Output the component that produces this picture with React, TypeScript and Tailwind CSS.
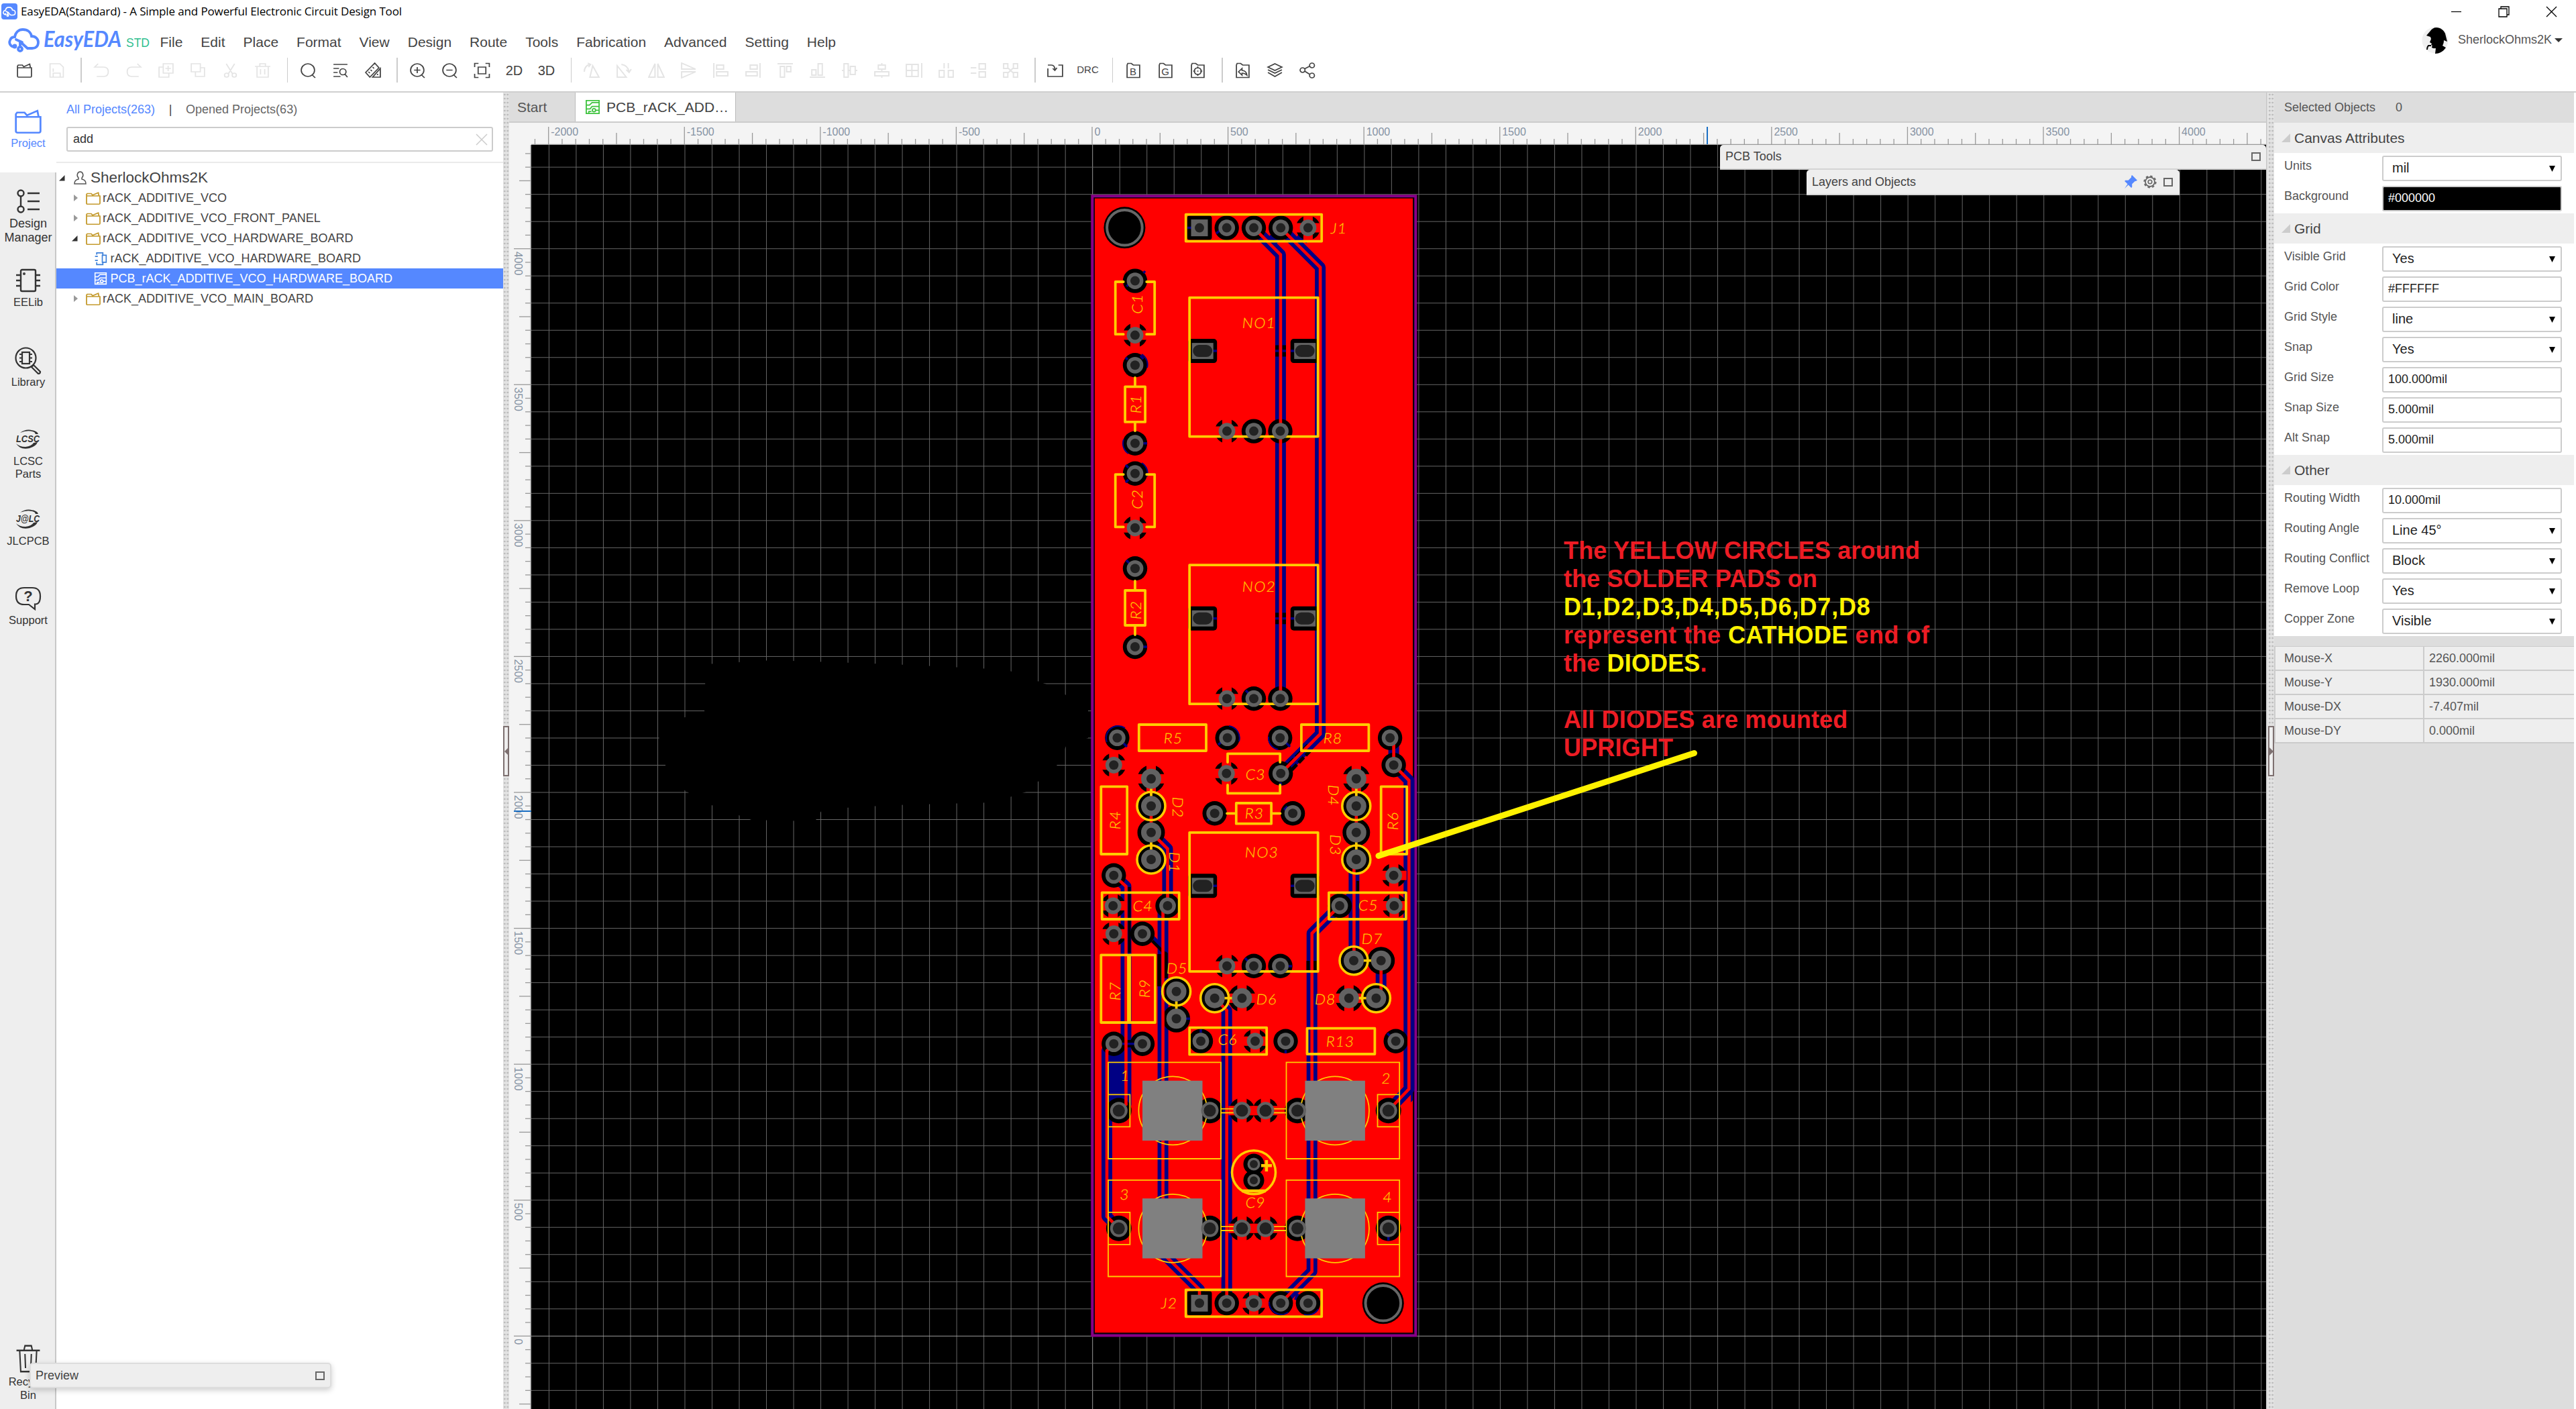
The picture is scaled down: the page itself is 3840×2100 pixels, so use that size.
import React from "react";

const FONT = "font-['Liberation_Sans',Arial,sans-serif]";

/* ---------- generic icon ---------- */
function Icon({ d, className = "", w = 24, h = 24, sw = 1.7, children }: { d?: string; className?: string; w?: number; h?: number; sw?: number; children?: React.ReactNode }) {
  return (
    <svg width={w} height={h} viewBox="0 0 24 24" preserveAspectRatio="none" fill="none" stroke="currentColor" strokeWidth={sw} className={"shrink-0 " + className}>
      {d && <path d={d} />}
      {children}
    </svg>
  );
}

const FOLDER = "M2 8h20v12.5q0 1.5-1.500 1.500h-17q-1.500 0-1.500-1.500zM2 8V5.500L3 4h6l2 2.500L19.500 2.500 20.500 8";
const FRAME = "M3 22.500V4l1-2.500h5L12 4h9v18.500z";

type Tool = { d?: string; t?: string; small?: boolean; letter?: string };
const GROUPS: { off?: boolean; items: (Tool & { on?: boolean })[] }[] = [
  { items: [{ d: FOLDER, on: true }, { d: "M2.500 2h14l5 5v15h-19zM7 22v-6h10v6M7 9v5" }] },
  {
    items: [
      { d: "M7 2 2 7h13q6.500 0 6.500 7t-6.500 7H5" },
      { d: "M17 2l5 5H9q-6.500 0-6.500 7t6.500 7h10" },
      { d: "M8 2h14v14H8zM8 7H2v15h14v-6M15 5v8M11 9h8" },
      { d: "M2 2h13v12H2zM8 14v7h13V8h-6" },
      { d: "M6 2l9 15M18 2L9 17M6.500 22a3 3 0 1 0 0-6 3 3 0 0 0 0 6zM17.500 22a3 3 0 1 0 0-6 3 3 0 0 0 0 6z" },
      { d: "M1 6h22M8 6V2h8v4M4 6v16h16V6M9 10v8M15 10v8" },
    ],
  },
  {
    items: [
      { on: true, d: "M11.500 21a9.500 9.500 0 1 0 0-19 9.500 9.500 0 0 0 0 19zM18 19l4 4" },
      { on: true, d: "M2 3h20M2 9h8M2 15h6M2 21h10M15.500 18.500a4.500 4.500 0 1 0 0-9 4.500 4.500 0 0 0 0 9zM18 17l4 5" },
      { on: true, d: "M15 1l6 7L8 22 2 15zM6 14l2 2M9 11l2 2M12 7l2 2M23 9v13H12zM19 17v2" },
    ],
  },
  {
    items: [
      { on: true, d: "M11.500 21a9.500 9.500 0 1 0 0-19 9.500 9.500 0 0 0 0 19zM18 19l4 4M11.500 7v9M7 11.500h9" },
      { on: true, d: "M11.500 21a9.500 9.500 0 1 0 0-19 9.500 9.500 0 0 0 0 19zM18 19l4 4M7 11.500h9" },
      { on: true, d: "M1.500 7V1.500H7M17 1.500h5.500V7M1.500 17v5.500H7M17 22.500h5.500V17M6.500 7h11v10h-11z" },
      { on: true, t: "2D" },
      { on: true, t: "3D" },
    ],
  },
  {
    items: [
      { d: "M9 22h13L13 5zM1 14q0-9 8-11M6 1l4 2-3 4" },
      { d: "M15 22H2V5zM8 3q9 1 11 11M15 11l4 4 3-5" },
      { d: "M10 2v20H1zM14 2v20h9z" },
      { d: "M2 1v9h20zM2 14h20L2 23z" },
      { d: "M2 1v22M6 4h10v6H6zM6 14h16v6H6z" },
      { d: "M22 1v22M8 4h10v6H8zM2 14h16v6H2z" },
      { d: "M1 2h22M5 6h6v16H5zM14 6h6v8h-6z" },
      { d: "M1 22h22M4 11h6v8H4zM13 2h6v17h-6z" },
      { d: "M1 12h3M10 12h3M20 12h3M4 2h6v20H4zM13 6h7v12h-7z" },
      { d: "M12 1v3M12 10v4M12 20v3M7 4h10v6H7zM2 14h20v6H2z" },
      { d: "M1 3h17v18H1zM9 3v18M1 12h17M23 1v22" },
      { d: "M9 1v8M15 1v8M2 12h7v10H2zM15 12h7v10h-7z" },
      { d: "M1 8h8M1 16h8M13 2h9v8h-9zM13 14h9v8h-9z" },
      { d: "M2 2h6v7H2zM16 2h6v7h-6zM2 15h6v7H2zM16 15h6v7h-6zM8 8l8 8M16 8l-8 8" },
    ],
  },
  { items: [{ on: true, d: "M1 9v12h21V4h-6M1 4h5q5 0 5 7M8 9l3 3 3-4" }, { on: true, t: "DRC", small: true }] },
  {
    items: [
      { on: true, d: FRAME, letter: "B" },
      { on: true, d: FRAME, letter: "G" },
      { on: true, d: FRAME + "M12 8a5 5 0 1 0 0 10 5 5 0 0 0 0-10zM12 6v3M12 17v3M5.500 13h3M15.500 13h3M11 13h2" },
    ],
  },
  {
    items: [
      { on: true, d: FRAME + "M6 14l5-5v3q6 0 7 7-3-3-7-3v3z" },
      { on: true, d: "M12 2l10 5-10 5L2 7zM2 11l10 5 10-5M2 15l10 6 10-6" },
      { on: true, d: "M5.500 15a3.500 3.500 0 1 0 0-7 3.500 3.500 0 0 0 0 7zM19 8a3.500 3.500 0 1 0 0-7 3.500 3.500 0 0 0 0 7zM19 23a3.500 3.500 0 1 0 0-7 3.500 3.500 0 0 0 0 7zM8.500 9.500l7.500-4M8.500 13l7.500 5" },
    ],
  },
];

function Toolbar() {
  return (
    <div className="flex h-[49px] items-center pl-3">
      {GROUPS.map((g, i) => (
        <React.Fragment key={i}>
          {i > 0 && <div className="ml-3 mr-[6px] h-[37px] w-[1.5px] bg-[#ccc]" />}
          {g.items.map((b, j) => (
            <div key={j} className={"flex h-9 w-12 items-center justify-center " + (b.on ? "text-[#444]" : "text-[#e4e4e4]")}>
              {b.t ? (
                <span className={b.small ? "text-[15px]" : "text-[20px]"}>{b.t}</span>
              ) : (
                <span className="relative flex">
                  <Icon d={b.d} w={25} h={24} sw={i === 4 ? 1.9 : 1.7} />
                  {b.letter && <span className="absolute inset-x-0 top-[5px] text-center text-[15px] leading-[18px]">{b.letter}</span>}
                </span>
              )}
            </div>
          ))}
        </React.Fragment>
      ))}
    </div>
  );
}

function Header() {
  return (
    <header className="flex h-[138px] shrink-0 flex-col border-b-2 border-[#cfcfcf] bg-white">
      <div className="flex h-[34px] items-center pl-[2px]">
        <div className="flex size-6 items-center justify-center rounded-[4px] bg-[#5588ff] text-white">
          <Cloud w={20} h={17} sw={4} />
        </div>
        <span className="ml-[5px] font-['Open_Sans','Noto_Sans',sans-serif] text-[17px] tracking-[-0.13px] text-black">EasyEDA(Standard) - A Simple and Powerful Electronic Circuit Design Tool</span>
        <div className="ml-auto flex items-center gap-[54px] pr-[28px] text-black">
          <svg width="17" height="17" stroke="currentColor" fill="none" strokeWidth="1.200"><path d="M1 8.500h15" /></svg>
          <svg width="17" height="17" stroke="currentColor" fill="none" strokeWidth="1.300"><path d="M1 4h12v12H1zM4 4V1h12v12h-3" /></svg>
          <svg width="17" height="17" stroke="currentColor" fill="none" strokeWidth="1.300"><path d="M1 1l15 15M16 1L1 16" /></svg>
        </div>
      </div>
      <div className="flex h-[46px] items-center">
        <div className="ml-3 flex w-[212px] items-center pt-[6px] text-[#5588ff]">
          <Cloud w={48} h={36} sw={3.8} />
          <svg width="124" height="42" viewBox="0 0 124 42" className="ml-[2px] overflow-visible">
            <g transform="translate(3 31) scale(0.86 1)">
              <text x="0" y="0" textLength="135" lengthAdjust="spacingAndGlyphs" fill="#5588ff" fontSize="33" fontStyle="italic" fontWeight="700" fontFamily="Lato, sans-serif">EasyEDA</text>
            </g>
          </svg>
          <span className="ml-[2px] pt-[8px] text-[17.5px] text-[#2fbf8f]">STD</span>
        </div>
        <nav className="ml-[14.500px] flex h-full items-center gap-[27px] pt-[12px] text-[21px] leading-[24px] text-[#444]">
          {["File", "Edit", "Place", "Format", "View", "Design", "Route", "Tools", "Fabrication", "Advanced", "Setting", "Help"].map((m) => (
            <span key={m}>{m}</span>
          ))}
        </nav>
        <div className="ml-auto flex items-center pr-[20px] pt-[5px] text-[18px] text-[#555]">
          <Avatar />
          <span className="ml-[14px]">SherlockOhms2K</span>
          <svg width="12" height="6" className="ml-[4px]"><path d="M0 0h12L6 6z" fill="#333" /></svg>
        </div>
      </div>
      <Toolbar />
    </header>
  );
}

function Cloud({ w, h, sw }: { w: number; h: number; sw: number }) {
  return (
    <svg width={w} height={h} viewBox="0 0 48 36" fill="none" stroke="currentColor" strokeWidth={sw} strokeLinecap="round" className="shrink-0">
      <path d="M9 28C3 27 1 22 3 18c1-3 4-5 7-5C11 6 16 2 22 2c7 0 12 4 13 10 6 0 10 4 10 9 0 6-4 9-9 9h-7l-9-8" />
      <path d="M21 21L12 17" />
      <circle cx="18" cy="31" r="3" />
      <path d="M18 27v-7" />
      <circle cx="10" cy="27" r="1.500" />
    </svg>
  );
}

function Avatar() {
  return (
    <svg width="40" height="40" viewBox="0 0 40 40">
      <circle cx="20" cy="20" r="19.500" fill="#f0f0f0" />
      <path d="M7 13l6-7c2-3 5-5 9-5 6 0 11 4 13 9l2 8 1 4-5-2c0 4-1 6-2 8l5 3c-4 6-10 9-16 9l1-8c-3 0-6 0-6-2l1-2-2-1 1-2-3-2 2-5-1-3z" fill="#000" />
      <path d="M14 28h-4q-2 2-2 6" stroke="#000" strokeWidth="2" fill="none" />
    </svg>
  );
}

/* ---------- left rail ---------- */
function Swoosh({ label }: { label: string }) {
  return (
    <svg width="40" height="32" viewBox="0 0 40 32" className="overflow-visible">
      <path d="M8 6Q20-3 34 6l-1 1Q22 0 8 6zM2 22q6 10 20 7 10-3 12-9l-6 1q-3 5-12 6-9 0-14-5z" fill="#333" />
      <path d="M26 2q8 2 9 6h-4q-1-3-5-6z" fill="#333" />
      <text x="2" y="20" textLength="35" lengthAdjust="spacingAndGlyphs" fontSize="14" fontWeight="700" fontStyle="italic" fontFamily="Liberation Sans, sans-serif" fill="#333">{label}</text>
    </svg>
  );
}

const RAIL: { label: string[]; icon: React.ReactNode; big?: boolean; active?: boolean }[] = [
  { label: ["Project"], active: true, icon: <Icon d={FOLDER} w={44} h={40} sw={1.5} /> },
  {
    label: ["Design", "Manager"],
    big: true,
    icon: (
      <svg width="36" height="36" viewBox="0 0 36 36" fill="none" stroke="currentColor" strokeWidth="2.400">
        <circle cx="7" cy="6" r="4.500" /><circle cx="7" cy="30" r="4.500" /><path d="M7 10.500v15M17 6h18M17 18h18M17 30h18" />
      </svg>
    ),
  },
  {
    label: ["EELib"],
    icon: (
      <svg width="38" height="36" viewBox="0 0 38 36" fill="none" stroke="currentColor" strokeWidth="2.400">
        <rect x="8" y="2" width="22" height="32" rx="2" /><path d="M1 10h7M1 18h7M1 26h7M30 10h7M30 18h7M30 26h7" /><circle cx="13" cy="8" r=".8" />
      </svg>
    ),
  },
  {
    label: ["Library"],
    icon: (
      <svg width="40" height="42" viewBox="0 0 40 42" fill="none" stroke="currentColor" strokeWidth="2.200">
        <circle cx="16.500" cy="17.500" r="15" /><rect x="11" y="9" width="11" height="17" /><path d="M7 12h4M7 17.500h4M7 23h4M22 12h4M22 17.500h4M22 23h4" /><path d="M25 31l3-3 10 10q0 3-3 3z" />
      </svg>
    ),
  },
  { label: ["LCSC", "Parts"], icon: <Swoosh label="LCSC" /> },
  { label: ["JLCPCB"], icon: <Swoosh label="J@LC" /> },
  {
    label: ["Support"],
    icon: (
      <span className="relative flex">
        <svg width="40" height="36" viewBox="0 0 40 36" fill="none" stroke="currentColor" strokeWidth="2.200"><path d="M14 2h12q12 0 12 12.500T30 26.500V34l-9-7h-7Q2 27 2 14.500T14 2z" /></svg>
        <span className="absolute inset-x-0 top-[3px] text-center text-[22px] font-bold leading-6">?</span>
      </span>
    ),
  },
];

function RailItem({ label, icon, big, active }: (typeof RAIL)[number]) {
  return (
    <div className={"flex h-[118.5px] w-[84px] shrink-0 flex-col items-center " + (active ? "bg-white text-[#5588ff]" : "text-[#333]")}>
      <div className="flex h-[66px] items-center justify-center pt-[20px]">{icon}</div>
      <div className={"text-center " + (big ? "text-[18px] leading-[21px]" : "text-[16.5px] leading-[19px]")}>
        {label.map((l) => <div key={l}>{l}</div>)}
      </div>
    </div>
  );
}

function Rail() {
  return (
    <aside className="flex w-[84px] shrink-0 flex-col border-r-2 border-[#c8c8c8] bg-[#eee]">
      {RAIL.map((r) => <RailItem key={r.label[0]} {...r} />)}
      <div className="mt-auto flex w-[84px] flex-col items-center pb-[11px] text-[16.500px] leading-[19.500px] text-[#333]">
        <Icon w={38} h={42} sw={1.300} d="M1 5h22M8 5l1-4h6l1 4M4 5l1 18h14l1-18M9 8l.5 12M15 8l-.5 12" />
        <div className="pt-[4px]">Recycle</div>
        <div>Bin</div>
      </div>
    </aside>
  );
}

/* ---------- project tree ---------- */
const Folder = () => <Icon d={FOLDER} w={24} h={21} sw={1.800} className="text-[#c49a2c]" />;

function PcbIcon({ className, s = 22 }: { className: string; s?: number }) {
  return <Icon w={s} h={s} sw={1.900} className={className} d="M2 2h20v20H2zM2 9h5l4-4h11M2 15h6l3-4h11M6 22v-3h4M14 14.500a2.500 2.500 0 1 0 0 5 2.500 2.500 0 0 0 0-5zM16.500 17H22" />;
}

function Collapsed() {
  return <svg width="8" height="12" className="ml-[25px] mr-[10px] shrink-0"><path d="M1 1l6 5-6 5z" fill="#999" /></svg>;
}
function Expanded({ className }: { className: string }) {
  return <svg width="9" height="9" className={"shrink-0 " + className}><path d="M8.500 0v8.500H0z" fill="#333" /></svg>;
}

function ProjectPanel() {
  return (
    <section className="flex w-[666px] shrink-0 flex-col bg-white">
      <div className="flex h-[51px] items-center pl-[15px] text-[18px] text-[#666]">
        <span className="text-[#5588ff]">All Projects(263)</span>
        <span className="w-[46px] text-center text-[#444]">|</span>
        <span>Opened Projects(63)</span>
      </div>
      <div className="ml-[15px] flex h-[37px] w-[636px] items-center justify-between rounded-[3px] border-2 border-[#ccc] pl-[8px] pr-[6px]">
        <span className="text-[18px] text-[#333]">add</span>
        <svg width="18" height="18" stroke="#ccc" strokeWidth="1.500"><path d="M1 1l16 16M17 1L1 17" /></svg>
      </div>
      <div className="mt-[15px] h-[2px] bg-[#eaeaea]" />
      <div className="flex flex-col pt-[7px] text-[18px] text-[#444] [&>div]:h-[30px]">
        <div className="flex items-center text-[22.5px]">
          <Expanded className="ml-[4px] mr-[13px]" />
          <svg width="19" height="20" viewBox="0 0 19 20" fill="none" stroke="#555" strokeWidth="1.500" className="mr-[6px]"><path d="M9.500 1a4.500 5 0 0 1 2.500 9v2q6 1 6 7H1q0-6 6-7v-2a4.500 5 0 0 1 2.500-9z" /></svg>
          SherlockOhms2K
        </div>
        <div className="flex items-center"><Collapsed /><Folder /><span className="ml-[2px]">rACK_ADDITIVE_VCO</span></div>
        <div className="flex items-center"><Collapsed /><Folder /><span className="ml-[2px]">rACK_ADDITIVE_VCO_FRONT_PANEL</span></div>
        <div className="flex items-center"><Expanded className="ml-[23px] mr-[11px]" /><Folder /><span className="ml-[2px]">rACK_ADDITIVE_VCO_HARDWARE_BOARD</span></div>
        <div className="flex items-center pl-[56px]">
          <Icon w={20} h={21} sw={2} className="text-[#3b7fd9]" d="M2 8h5M2 15h5M5 5V2h11v3M5 18v4h11v-3M15 6h7v12h-7z" />
          <span className="ml-[4.5px]">rACK_ADDITIVE_VCO_HARDWARE_BOARD</span>
        </div>
        <div className="flex items-center bg-[#5588ff] pl-[56px] text-white">
          <PcbIcon className="text-white" s={20} />
          <span className="ml-[4.5px]">PCB_rACK_ADDITIVE_VCO_HARDWARE_BOARD</span>
        </div>
        <div className="flex items-center"><Collapsed /><Folder /><span className="ml-[2px]">rACK_ADDITIVE_VCO_MAIN_BOARD</span></div>
      </div>
    </section>
  );
}

function Splitter({ right }: { right?: boolean }) {
  return (
    <div className="flex w-[9px] shrink-0 flex-col bg-[#e2e2e2] bg-[radial-gradient(#bdbdbd_1px,transparent_1.2px)] bg-[length:4.5px_6px]">
      <div className="mt-[944px] flex h-[75px] w-[9px] items-center justify-center border-2 border-[#7d7070] bg-[#eee]">
        <svg width="6" height="12"><path d={right ? "M0 0l6 6-6 6z" : "M6 0L0 6l6 6z"} fill="#7d7070" /></svg>
      </div>
    </div>
  );
}

/* ---------- rulers ---------- */
const X0 = 1628.5;
const Y0 = 1991.3;
const STEP = 40.515;
const range = (a: number, b: number) => Array.from({ length: b - a + 1 }, (_, i) => a + i);

function TopRuler() {
  return (
    <svg width="2619" height="33" viewBox="759 183 2619 33" className="block shrink-0 bg-[#f4f4f4]">
      <path d="M792 215.500H3378" stroke="#999" strokeWidth="1.500" />
      {range(-41, 86).map((n) => {
        const x = X0 - 0.500 + (n * STEP) / 2;
        const y = n % 10 === 0 ? 189 : n % 5 === 0 ? 198 : 207;
        return <path key={n} d={`M${x} ${y}V215`} stroke="#999" strokeWidth="1.300" />;
      })}
      {range(-4, 8).map((n) => (
        <text key={n} x={X0 + 3 + n * 5 * STEP} y="202" fontSize="16" fill="#8592a3" fontFamily="Liberation Sans, sans-serif">{n * 500}</text>
      ))}
      <path d="M2545 189V215" stroke="#1a6fc4" strokeWidth="2" />
    </svg>
  );
}

function SideRuler() {
  return (
    <svg width="33" height="1884" viewBox="759 216 33 1884" className="block shrink-0 bg-[#f4f4f4]">
      <path d="M791.300 216V2100" stroke="#999" strokeWidth="1.500" />
      {range(-5, 87).map((n) => {
        const y = Y0 - (n * STEP) / 2;
        const x = n % 10 === 0 ? 766 : n % 5 === 0 ? 774 : 783;
        return <path key={n} d={`M${x} ${y}H792`} stroke="#999" strokeWidth="1.300" />;
      })}
      {range(0, 8).map((n) => (
        <text key={n} transform={`translate(767 ${Y0 + 4 - n * 5 * STEP}) rotate(90)`} fontSize="16" fill="#8592a3" fontFamily="Liberation Sans, sans-serif">{n * 500}</text>
      ))}
      <path d="M766 1209H792" stroke="#1a6fc4" strokeWidth="2" />
    </svg>
  );
}

/* ---------- board ---------- */
type Pad = { x: number; y: number; k?: "s" | "d" | "t" | "c" | "w"; th?: boolean; ring?: boolean };
const KIND = {
  s: { b: 18.200, g: 12.400, h: 7 },
  d: { b: 20.500, g: 15, h: 7 },
  t: { b: 18.200, g: 12.600, h: 7.500 },
  w: { b: 19, g: 13, h: 9 },
  c: { b: 15.500, g: 9.500, h: 6 },
};
const NO_TOPS = [443.600, 842.200, 1240.800];
const PADS: Pad[] = [
  { x: 1828.700, y: 339.600 }, { x: 1869, y: 339.600 }, { x: 1909.200, y: 339.600 }, { x: 1949.900, y: 339.600, th: true },
  { x: 1692, y: 418.600 }, { x: 1692, y: 499.600, th: true }, { x: 1692, y: 544.300 }, { x: 1692, y: 660.700 },
  { x: 1692, y: 705.700 }, { x: 1692, y: 786.800, th: true }, { x: 1692, y: 847.300 }, { x: 1692, y: 964 },
  ...NO_TOPS.flatMap((t) => [{ x: 1829, y: t + 199, th: true }, { x: 1869, y: t + 199 }, { x: 1908.500, y: t + 199 }]),
  { x: 1665.400, y: 1099.700 }, { x: 1829.700, y: 1099.700 }, { x: 1908.200, y: 1099.700 }, { x: 2072.100, y: 1099.700 },
  { x: 1660.300, y: 1140.300, th: true }, { x: 2077.600, y: 1140.300 },
  { x: 1828.300, y: 1152.700, th: true }, { x: 1909.200, y: 1152.700 },
  { x: 1810.700, y: 1212.300 }, { x: 1927.100, y: 1212.300 },
  { x: 1716, y: 1160.700, k: "d", th: true }, { x: 1716, y: 1201.300, k: "d", ring: true }, { x: 1716, y: 1240.700, k: "d" }, { x: 1716, y: 1281, k: "d", ring: true },
  { x: 2021.800, y: 1160.700, k: "d", th: true }, { x: 2021.800, y: 1201.300, k: "d", ring: true }, { x: 2021.800, y: 1240.700, k: "d" }, { x: 2021.800, y: 1281, k: "d", ring: true },
  { x: 1660.300, y: 1304.700 }, { x: 2077.600, y: 1304.700, th: true },
  { x: 1659.200, y: 1350, th: true }, { x: 1740.500, y: 1350 }, { x: 1997, y: 1350 }, { x: 2078.300, y: 1350, th: true },
  { x: 1660.300, y: 1391.700, th: true }, { x: 1703, y: 1391.700 },
  { x: 2018, y: 1431.700, k: "d", ring: true }, { x: 2058.700, y: 1431.700, k: "d" },
  { x: 1753.600, y: 1477.700, k: "d", ring: true }, { x: 1753.600, y: 1518.300, k: "d" },
  { x: 1810.700, y: 1487.700, k: "d", ring: true }, { x: 1851.400, y: 1487.700, k: "d", th: true },
  { x: 2010.800, y: 1487.700, k: "d", th: true }, { x: 2051.400, y: 1487.700, k: "d", ring: true },
  { x: 1660.300, y: 1555.700 }, { x: 1703, y: 1555.700 },
  { x: 1790, y: 1551.700 }, { x: 1871, y: 1551.700, th: true }, { x: 1916.500, y: 1551.700 }, { x: 2080.700, y: 1551.700 },
  ...[1655.300, 1830.800].flatMap((y): Pad[] => [
    { x: 1667.800, y, k: "w" }, { x: 1803.500, y, k: "w" }, { x: 1851.400, y, k: "w", th: true },
    { x: 1886.500, y, k: "w", th: true }, { x: 1934, y, k: "w" }, { x: 2069.700, y, k: "w" },
  ]),
  { x: 1869, y: 1735, k: "c" }, { x: 1869, y: 1759.300, k: "c" },
  { x: 1828.700, y: 1942.300 }, { x: 1869, y: 1942.300, th: true }, { x: 1909.200, y: 1942.300 }, { x: 1949.900, y: 1942.300 },
];

const TRACKS = [
  "M1869 339.600L1908.900 379.500V1041",
  "M1909.200 339.600L1968.100 398.500V1094L1909.200 1152.700",
  "M2077.600 1100V1140.300L2100.300 1163V1623L2069.700 1655",
  "M1716 1201V1240.700L1740.500 1265V1350",
  "M1740.500 1350L1733.600 1357V1868L1788 1922V1942",
  "M1660.300 1304.700L1678.500 1321V1646L1667.800 1655",
  "M1997 1350L1955.700 1391V1895L1909.200 1942",
  "M2021.800 1201V1240",
  "M2021.800 1281L2018.400 1284V1431",
  "M1660.300 1555.700L1650 1566V1813L1667.800 1830.700",
  "M1810.700 1487.700L1828.700 1506V1942",
  "M2058.700 1431.700V1480",
];

function rect(x1: number, y1: number, x2: number, y2: number) {
  return `M${x1} ${y1}H${x2}V${y2}H${x1}Z`;
}

const SILK = [
  rect(1767.700, 319.600, 1970.200, 359.600), rect(1767.700, 1922.300, 1970.200, 1962.300),
  ...[[420, 498.200], [707.100, 785.400]].flatMap(([a, b]) => [`M1674.700 ${a}H1662.700V${b}H1674.700`, `M1709.200 ${a}H1721.200V${b}H1709.200`]),
  rect(1677.100, 576.400, 1707.100, 628.900), "M1692 563V576M1692 629V642",
  rect(1677.100, 880, 1707.100, 932), "M1692 866V880M1692 932V946",
  ...NO_TOPS.map((t) => rect(1773.200, t, 1964.700, t + 207)),
  rect(1697.800, 1080, 1798, 1119), rect(1939.900, 1080, 2040.400, 1119),
  "M1830 1136V1123.300H1908.200V1136M1830 1170V1182.300H1908.200V1170",
  rect(1842.800, 1197, 1895.100, 1227.700), "M1829 1212.300H1842M1895 1212.300H1908.500",
  rect(1641.300, 1172.300, 1680.200, 1273), rect(2058.700, 1172.300, 2097.200, 1273),
  rect(1642.700, 1330.300, 1757.700, 1370), rect(1980.900, 1330.300, 2095.900, 1370),
  rect(1641.300, 1423.300, 1682, 1524), rect(1684, 1423.300, 1721.900, 1524),
  rect(1773.200, 1531.700, 1888.200, 1571.700), rect(1948.500, 1532.700, 2049.400, 1571),
  "M1716 1175.700V1186.700M1716 1255.700V1266M2021.800 1175.700V1186.700M2021.800 1255.700V1266",
  "M1753.600 1493V1503M1826 1487.700H1837M2026 1487.700H2036M2033 1431.700H2044",
].join("");

type Lab = [string, number, number, number?];
const LABELS: Lab[] = [
  ["J1", 1983, 348], ["NO1", 1851, 489], ["NO2", 1851, 881.500], ["NO3", 1855, 1278],
  ["C1", 1703, 468.5, -90], ["R1", 1701, 617, -90], ["C2", 1703, 759.500, -90], ["R2", 1701, 924, -90],
  ["R5", 1734, 1107.500], ["R8", 1972, 1107.500], ["C3", 1856, 1161.500], ["R3", 1855, 1220],
  ["D2", 1748, 1187, 90], ["D1", 1743, 1269, 90], ["D4", 1980, 1169, 90], ["D3", 1983, 1243, 90],
  ["R4", 1670, 1237, -90], ["R6", 2084, 1238, -90], ["C4", 1688, 1357.500], ["C5", 2024, 1356.500],
  ["R7", 1670, 1492, -90], ["R9", 1714, 1488, -90], ["D5", 1738, 1450.500], ["D6", 1872, 1497],
  ["D7", 2029, 1407], ["D8", 1959, 1496.500], ["C6", 1815, 1557], ["R13", 1976, 1559.500],
  ["1", 1670, 1611], ["2", 2059, 1615], ["3", 1669, 1787.500], ["4", 2061, 1791.500], ["C9", 1856, 1800], ["J2", 1730, 1949.500],
];

function PadCore({ p }: { p: Pad }) {
  const k = KIND[p.k ?? "s"];
  return (
    <g>
      <circle cx={p.x} cy={p.y} r={k.g} fill="#626262" />
      <circle cx={p.x} cy={p.y} r={k.h} fill="#222" />
    </g>
  );
}

function Board() {
  return (
    <g>
      <rect x="1628.300" y="292.200" width="482" height="1698.300" fill="#0a000a" stroke="#880088" strokeWidth="4" />
      <rect x="1632" y="295.700" width="474" height="1690.500" fill="#ff0000" />
      <g fill="none" stroke="#000084" strokeWidth="16" strokeLinejoin="round">
        {TRACKS.map((d) => <path key={d} d={d} />)}
      </g>
      <path d="M1652.500 1560H1676.500V1655H1652.500zM2103 1158L2106 1161V1640L2103 1643z" fill="#000084" />
      <path d="M1894 350L1905 361M1935 350L1950 358M1931 1932L1945 1938" stroke="#000084" strokeWidth="10" />
      <path d="M1950 1110L1917 1143M1954 1118L1925 1148" stroke="#000" strokeWidth="5" strokeDasharray="11 4" />
      <path d="M1718 1402L1738 1422V1458M1728 1422V1470" stroke="#000" strokeWidth="5.500" fill="none" />
      <path d="M1712 1390L1739 1417" stroke="#000084" strokeWidth="5" />
      <path d="M1683.500 1322V1420M2024 1313V1330" stroke="#000" strokeWidth="4" />
      <path d="M2019 1324L2003 1342" stroke="#000084" strokeWidth="6" />
      {/* clearances */}
      <g fill="#000">
        {PADS.map((p, i) => <circle key={i} cx={p.x} cy={p.y} r={KIND[p.k ?? "s"].b} />)}
        {[339.600, 1942.300].map((y) => <rect key={y} x="1769.500" y={y - 18} width="37" height="36" rx="4" />)}
        {NO_TOPS.map((t) => (
          <g key={t}>
            <rect x="1771" y={t + 61.500} width="43.200" height="36" rx="5" />
            <rect x="1923.700" y={t + 61.500} width="43" height="36" rx="5" />
          </g>
        ))}
        {NO_TOPS.slice(0, 2).map((t) => <path key={t} d={`M1901 ${t + 71}h5.500v17h-5.500zM1911.500 ${t + 71}h5.500v17h-5.500z`} />)}
        <path d="M1947.500 1432h5v15h-5zM1958 1432h5v15h-5z" />
        <path d="M1660 1550h43v11h-43z" />
        <circle cx="1676.400" cy="339.300" r="31" />
        <circle cx="2061.800" cy="1942.300" r="31" />
      </g>
      <g stroke="#000084" strokeWidth="3.500" fill="none">
        {NO_TOPS.map((t) => <path key={t} d={`M1808 ${t + 79.500}H1814M1924 ${t + 79.500}H1930`} />)}
        {NO_TOPS.slice(0, 2).map((t) => <path key={t} d={`M1901 ${t + 79.500}h5.500m5 0h5.500`} />)}
        <path d="M1673 1555.700H1692M1704.500 407L1707 404M1679.500 427L1682 424M1704.500 660.700H1710M1704.500 964H1710M1704.500 535L1700 530M1681 536L1678 533M1770 339.600H1776M1813 348L1819 343M1682 697L1678 693M1678 719L1682 715M1683 839L1679 835M1909 1166V1171M1921 1440H1926M1860 1432L1856 1428M1861 1033L1857 1029M1917 1107L1923 1113M1816 1110L1823 1104M1675 1108L1680 1113M1768 1518.300H1774M1916.500 1565V1570M1790 1539V1534M2069.700 1843V1849M2072 1544L2068 1540M1919 1202L1914 1207M1800 1223L1804 1219" />
        <path d="M1702 528A18 18 0 0 1 1710 548M1682 676A18 18 0 0 1 1675 655M1702 690A18 18 0 0 1 1710 710M1650 1106A18 18 0 0 1 1677 1085M1832 1082A18 18 0 0 1 1847 1105M1905 1117A18 18 0 0 1 1891 1098M1920 1956A18 18 0 0 1 1892 1940M1965 1951A18 18 0 0 1 1944 1959" strokeWidth="2" />
      </g>
      {/* copper */}
      <g fill="none" stroke="#ff0000" strokeWidth="4.600">
        {TRACKS.map((d) => <path key={d} d={d} />)}
        {PADS.filter((p) => p.th).map((p, i) => {
          const r = KIND[p.k ?? "s"].b + 1;
          return <path key={i} d={`M${p.x - r} ${p.y}h${2 * r}M${p.x} ${p.y - r}v${2 * r}`} strokeWidth="14" />;
        })}
      </g>
      {/* silkscreen */}
      <path d={SILK} fill="none" stroke="#ffcc00" strokeWidth="3.800" strokeLinejoin="round" strokeLinecap="round" />
      <g fill="none" stroke="#ffcc00" strokeWidth="3.600">
        <circle cx="1869" cy="1747.300" r="32.500" />
        <path d="M1851 1775H1887" strokeWidth="4.500" />
        <path d="M1880 1737.300H1896M1887.900 1729V1746" strokeWidth="4.500" />
      </g>
      {[0, 175.500].map((o) => (
        <g key={o} fill="none" stroke="#ffcc00" strokeWidth="1.800">
          <path d={rect(1652, 1583.300 + o, 1820, 1727 + o) + rect(1917.500, 1583.300 + o, 2086.200, 1727 + o) + rect(1652, 1631.300 + o, 1684.400, 1679.300 + o) + rect(2053.500, 1631.300 + o, 2086.200, 1679.300 + o)} />
          <path d={`M1820 ${1652.700 + o}H1840M1820 ${1658.500 + o}H1840M1898 ${1652.700 + o}H1918M1898 ${1658.500 + o}H1918`} />
          <circle cx="1748.400" cy={1655.300 + o} r="51" />
          <circle cx="1990" cy={1655.300 + o} r="51" />
          <rect x="1703" y={1610.700 + o} width="89.500" height="89.300" fill="#808080" stroke="none" />
          <rect x="1945.400" y={1610.700 + o} width="89.500" height="89.300" fill="#808080" stroke="none" />
        </g>
      ))}
      {/* pads */}
      {PADS.map((p, i) => <PadCore key={i} p={p} />)}
      {[339.600, 1942.300].map((y) => (
        <g key={y}>
          <rect x="1775.500" y={y - 12.500} width="25" height="25" fill="#626262" />
          <circle cx="1788" cy={y} r="7" fill="#222" />
        </g>
      ))}
      {NO_TOPS.map((t) => (
        <g key={t}>
          {[1776.700, 1929.200].map((x) => (
            <g key={x}>
              <rect x={x} y={t + 67.500} width="32" height="24" fill="#626262" />
              <rect x={x + 1.500} y={t + 70.500} width="29" height="18" rx="9" fill="#222" />
            </g>
          ))}
        </g>
      ))}
      {[[1676.400, 339.300], [2061.800, 1942.300]].map(([x, y]) => <circle key={x} cx={x} cy={y} r="26.300" fill="none" stroke="#666" strokeWidth="4" />)}
      {PADS.filter((p) => p.ring).map((p, i) => <circle key={i} cx={p.x} cy={p.y} r="21" fill="none" stroke="#ffcc00" strokeWidth="3.600" />)}
      {LABELS.map(([t, x, y, r], i) => (
        <text key={i} transform={`translate(${x} ${y}) rotate(${r ?? 0}) skewX(-6)`} fontSize="21.500" letterSpacing="1.500" fontWeight="300" fontFamily="Lato, sans-serif" fill="#ffcc00" stroke="#ffcc00" strokeWidth="0.250">{t}</text>
      ))}
    </g>
  );
}

const RED_LINE = "text-[#ed1c24]";
const YEL_LINE = "text-[#fff200]";

function Note() {
  return (
    <div className="absolute left-[1539px] top-[584px] whitespace-nowrap text-[36px] font-bold leading-[42px] tracking-[0.15px]">
      <div className={RED_LINE}>The YELLOW CIRCLES around</div>
      <div className={RED_LINE}>the SOLDER PADS on</div>
      <div className={"tracking-[0.85px] " + YEL_LINE}>D1,D2,D3,D4,D5,D6,D7,D8</div>
      <div className={"tracking-[0.5px] " + RED_LINE}>represent the <span className={YEL_LINE}>CATHODE</span> end of</div>
      <div className={RED_LINE}>the <span className={YEL_LINE}>DIODES</span>.</div>
      <div className="h-[42px]" />
      <div className={RED_LINE}>All DIODES are mounted</div>
      <div className={RED_LINE}>UPRIGHT</div>
    </div>
  );
}

const Square = ({ className = "" }: { className?: string }) => <div className={"h-[13px] w-[14px] border-2 border-[#666] " + className} />;

function Canvas() {
  return (
    <div className="relative h-[1884px] w-[2586px] overflow-hidden bg-black">
      <svg width="2586" height="1884" viewBox="792 216 2586 1884" className="block">
        <g strokeWidth="1">
          {range(-20, 43).map((n) => <path key={n} d={`M${X0 + 0.200 + n * STEP} 216V2100`} stroke={n ? "#666" : "#999"} />)}
          {range(-2, 43).map((n) => <path key={n} d={`M792 ${Y0 - n * STEP}H3378`} stroke={n ? "#666" : "#999"} />)}
        </g>
        <path d="M1052 990L1150 984 1330 990 1500 998 1560 1020 1622 1054V1100L1590 1110 1576 1140 1530 1180 1480 1196 1330 1200 1226 1206 1215 1224 1120 1222 1050 1196 1000 1165 982 1110 984 1078 1050 1062z" fill="#000" />
        <Board />
        <path d="M2525.500 1122.500L2055 1275.500" stroke="#fff200" strokeWidth="9" strokeLinecap="round" />
      </svg>
      <Note />
      <div className="absolute right-0 top-0 flex h-[37px] w-[814px] items-center justify-between rounded-t-[5px] border-b-2 border-[#d4d4d4] bg-[#eee] pl-[8px] pr-[8px] text-[18px] text-[#444]">
        <span>PCB Tools</span>
        <Square />
      </div>
      <div className="absolute left-[1901px] top-[37px] flex h-[38px] w-[556px] items-center rounded-t-[5px] border-b-2 border-[#d4d4d4] bg-[#eee] pl-[8px] pr-[10px] text-[18px] text-[#444]">
        <span className="mr-auto">Layers and Objects</span>
        <svg width="20" height="20" viewBox="0 0 18 18"><path d="M11 0l7 7-2 1-1 0-4 4 0 4-1 1-4-4-5 5 4-6-4-4 1-1h4l4-4V1z" fill="#5588ff" /></svg>
        <svg width="20" height="20" viewBox="0 0 20 20" fill="none" stroke="#666" className="ml-[9px] mr-[10px]">
          <circle cx="10" cy="10" r="7" strokeWidth="1.800" /><circle cx="10" cy="10" r="2.800" strokeWidth="1.600" /><circle cx="10" cy="10" r="8.600" strokeWidth="2" strokeDasharray="3.400 3.350" />
        </svg>
        <Square />
      </div>
    </div>
  );
}

function Workspace() {
  return (
    <main className="flex w-[2619px] shrink-0 flex-col">
      <div className="flex h-[45px] shrink-0 border-b-2 border-[#ccc] bg-[#ddd] text-[21px] text-[#555]">
        <div className="flex w-[99px] items-center border-r border-[#bbb] pl-[12px]">Start</div>
        <div className="flex w-[239px] items-center border-r border-[#bbb] bg-white pl-[14px] text-[#444]">
          <PcbIcon className="text-[#3fc33f]" s={23} />
          <span className="ml-[9px] whitespace-nowrap">PCB_rACK_ADD…</span>
        </div>
      </div>
      <TopRuler />
      <div className="flex">
        <SideRuler />
        <Canvas />
      </div>
    </main>
  );
}

/* ---------- properties ---------- */
function Section({ title }: { title: string }) {
  return (
    <div className="mr-[3px] flex h-[45px] items-center bg-[#eee] pl-[11px] text-[21px] text-[#444]">
      <svg width="13" height="13" className="mr-[6px]"><path d="M13 0v13H0z" fill="#ccc" /></svg>
      {title}
    </div>
  );
}

function Field({ label, value, select, dark }: { label: string; value: string; select?: boolean; dark?: boolean }) {
  return (
    <div className="mr-[3px] flex h-[45px] bg-white">
      <span className="w-[161px] pl-[15px] text-[18px] leading-[38px] text-[#555]">{label}</span>
      <div className={"mt-[4px] flex h-[38px] w-[268px] items-center justify-between rounded-[3px] border-2 border-[#ccc] pb-[2px] " + (select ? "pl-[13px] text-[20px] " : "pl-[7px] text-[18px] ") + (dark ? "bg-black text-white" : "bg-white text-[#222]")}>
        {value}
        {select && <svg width="9" height="9" className="mr-[8px] mt-[3px]"><path d="M0 0h9L4.500 9z" fill="#000" /></svg>}
      </div>
    </div>
  );
}

function Properties() {
  return (
    <aside className="flex w-[450px] shrink-0 flex-col border-r-[3px] border-white bg-[#ddd] [&>*]:mr-0">
      <div className="flex h-[45px] items-center pl-[15px] text-[18px] text-[#555]">
        <span className="w-[166px]">Selected Objects</span>
        <span>0</span>
      </div>
      <Section title="Canvas Attributes" />
      <Field label="Units" value="mil" select />
      <Field label="Background" value="#000000" dark />
      <Section title="Grid" />
      <Field label="Visible Grid" value="Yes" select />
      <Field label="Grid Color" value="#FFFFFF" />
      <Field label="Grid Style" value="line" select />
      <Field label="Snap" value="Yes" select />
      <Field label="Grid Size" value="100.000mil" />
      <Field label="Snap Size" value="5.000mil" />
      <Field label="Alt Snap" value="5.000mil" />
      <Section title="Other" />
      <Field label="Routing Width" value="10.000mil" />
      <Field label="Routing Angle" value="Line 45°" select />
      <Field label="Routing Conflict" value="Block" select />
      <Field label="Remove Loop" value="Yes" select />
      <Field label="Copper Zone" value="Visible" select />
      <div className="mt-[15px] border-l-2 border-t border-[#ccc] text-[18px] text-[#555]">
        {[["Mouse-X", "2260.000mil"], ["Mouse-Y", "1930.000mil"], ["Mouse-DX", "-7.407mil"], ["Mouse-DY", "0.000mil"]].map(([k, v]) => (
          <div key={k} className="flex h-[36px] items-center border-b-2 border-[#ccc] bg-[#eee]">
            <span className="flex h-full w-[222px] items-center border-r-2 border-[#ccc] pl-[13px]">{k}</span>
            <span className="pl-[7px]">{v}</span>
          </div>
        ))}
      </div>
    </aside>
  );
}

export default function App() {
  return (
    <div className={"relative flex h-[2100px] w-[3840px] flex-col overflow-hidden bg-white " + FONT}>
      <Header />
      <div className="flex h-[1962px]">
        <Rail />
        <ProjectPanel />
        <Splitter />
        <Workspace />
        <div className="w-[3px] shrink-0 border-l-2 border-[#ccc] bg-[#eee]" />
        <Splitter right />
        <Properties />
      </div>
      <div className="absolute left-[44px] top-[2031px] flex h-[38px] w-[450px] items-center justify-between rounded-[5px] border-2 border-[#ddd] bg-[#eee] pl-[7px] pr-[8px] text-[18px] text-[#444] shadow-[0_3px_8px_rgba(0,0,0,0.2)]">
        <span>Preview</span>
        <Square />
      </div>
    </div>
  );
}
